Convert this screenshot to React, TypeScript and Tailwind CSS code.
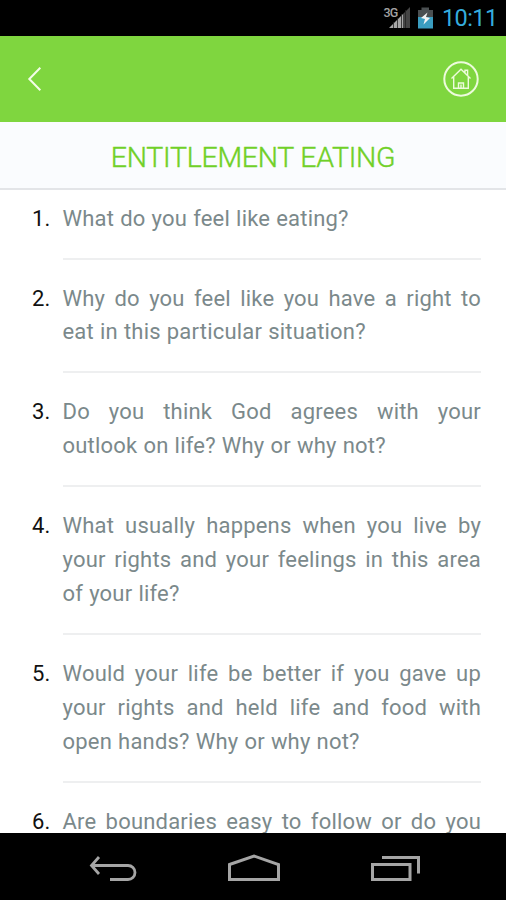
import { ReactNode } from "react";

interface IQuestion {
  id: number;
  lines: string[];
  continues?: boolean; // the rest of the question is below the fold
}

// the lines are broken by hand so every one but the last is justified
const questions: IQuestion[] = [
  { id: 1, lines: ["What do you feel like eating?"] },
  {
    id: 2,
    lines: [
      "Why do you feel like you have a right to",
      "eat in this particular situation?",
    ],
  },
  {
    id: 3,
    lines: [
      "Do you think God agrees with your",
      "outlook on life? Why or why not?",
    ],
  },
  {
    id: 4,
    lines: [
      "What usually happens when you live by",
      "your rights and your feelings in this area",
      "of your life?",
    ],
  },
  {
    id: 5,
    lines: [
      "Would your life be better if you gave up",
      "your rights and held life and food with",
      "open hands? Why or why not?",
    ],
  },
  { id: 6, lines: ["Are boundaries easy to follow or do you"], continues: true },
];

function StatusBar() {
  return (
    <div className="flex h-9 shrink-0 items-center bg-black pl-[383px]">
      <svg width="59" height="36" viewBox="0 0 59 36" className="shrink-0">
        <text x="0.5" y="16.5" fill="#a3a3a3" fontSize="12.5" fontWeight="500" letterSpacing="-0.8">
          3G
        </text>
        <path d="M6 28 20 14V28Z" fill="#a6a6a6" />
        <path d="M20 14 27 7V28H20Z" fill="#454545" />
        <path d="M10.5 22v6M14.5 18v10M18.5 14v14M22.5 10v18" stroke="#222" strokeWidth="0.8" />
        <path d="M35 10h3.500V7.500h7.500V10H50v7H35Z" fill="#4b5052" />
        <path d="M35 17H50v11.500H35Z" fill="#3a9dc0" />
        <path d="m44.500 12.500-6.500 5.500 4 1-1.500 5.500 6.500-6.500-4-1Z" fill="#f4f4f4" />
      </svg>
      <span className="text-[23.500px] leading-9 tracking-[-0.6px] text-[#35acdd]">10:11</span>
    </div>
  );
}

function Header() {
  return (
    <header className="flex h-[86px] shrink-0 items-center justify-between bg-[#7fd63f] pr-[26px] pl-[27px] text-white">
      <button aria-label="Back">
        <svg width="16" height="26" viewBox="0 0 16 26" fill="none" stroke="#f3fde8" strokeWidth="2">
          <path d="M13.300 1.800 2.300 13l11 11.200" />
        </svg>
      </button>
      <button aria-label="Home">
        <svg width="38" height="38" viewBox="0 0 38 38" fill="none" stroke="#edfbdc">
          <circle cx="19" cy="19" r="16.700" strokeWidth="2" />
          <path
            d="M9.500 18.500 19 9.300l9.500 9.200M11.700 17v11.200h14.600V17M23 12.500V10.200h2.600v5M16.500 28v-5h5v5M19 24.500v3.500"
            strokeWidth="1.400"
          />
        </svg>
      </button>
    </header>
  );
}

function Question({ id, children }: { id: number; children: ReactNode }) {
  return (
    <li className="flex pr-[25px] pl-[32px] text-[22px] leading-[33.800px]">
      <span className="w-[30.500px] shrink-0 text-[#111]">{id}.</span>
      <div className="mb-[22px] flex-1 border-b-2 border-[#eeeff0] pb-[22.300px] tracking-[0.200px] [word-spacing:0.4px] text-[#7b898b]">
        {children}
      </div>
    </li>
  );
}

function NavBar() {
  return (
    <nav className="flex h-[67px] shrink-0 items-center bg-black pt-1 pl-[88px]">
      <svg width="50" height="34" viewBox="0 0 50 34" fill="none" stroke="#a5a5a5" strokeWidth="2.800">
        <path d="M11 5 3.500 13.500 11 22M4 13.500h36a7 7 0 0 1 0 14H22" />
      </svg>
      <svg
        width="54"
        height="34"
        viewBox="0 0 54 34"
        fill="none"
        stroke="#a5a5a5"
        strokeWidth="3"
        className="ml-[88.500px]"
      >
        <path d="M2.500 12.500 27 4l24.500 8.500v15h-49Z" />
      </svg>
      <svg
        width="50"
        height="34"
        viewBox="0 0 50 34"
        fill="none"
        stroke="#a5a5a5"
        strokeWidth="3"
        className="ml-[90.500px]"
      >
        <path d="M1.500 12.500h37.500v15H1.500ZM11 5.500h36.500v16" />
      </svg>
    </nav>
  );
}

export default function App() {
  return (
    <div className="flex h-screen flex-col overflow-hidden bg-white font-['Roboto',sans-serif]">
      <StatusBar />
      <Header />
      <h1 className="h-[68px] shrink-0 border-b-2 border-[#e3e5e8] bg-[#fafcfe] text-center text-[28.500px] leading-[71px] font-light tracking-[-0.270px] text-[#70d027] [-webkit-text-stroke:0.4px_#70d027]">
        ENTITLEMENT EATING
      </h1>
      <ol className="min-h-0 flex-1 overflow-hidden pt-[11.500px]">
        {questions.map((question) => (
          <Question key={question.id} id={question.id}>
            {question.lines.map((line, i) => (
              <p
                key={line}
                className={
                  question.continues || i < question.lines.length - 1
                    ? "[text-align-last:justify]"
                    : "whitespace-nowrap"
                }
              >
                {line}
              </p>
            ))}
          </Question>
        ))}
      </ol>
      <NavBar />
    </div>
  );
}
